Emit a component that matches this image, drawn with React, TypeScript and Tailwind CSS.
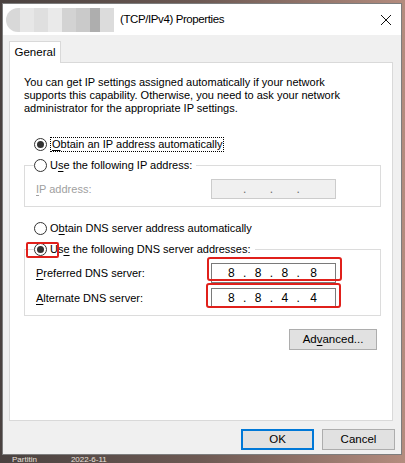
import type { ReactNode } from 'react';

const font = { fontFamily: '"Liberation Sans", Arial, sans-serif' };

function Radio({ checked }: { checked?: boolean }) {
  return (
    <span className="grid h-[13px] w-[13px] shrink-0 place-items-center rounded-full border border-[#333] bg-white">
      {checked && <span className="h-[7px] w-[7px] rounded-full bg-[#333]" />}
    </span>
  );
}

function U({ children }: { children: ReactNode }) {
  return <span className="underline underline-offset-2">{children}</span>;
}

function IpBox({ parts, disabled }: { parts: string[]; disabled?: boolean }) {
  return (
    <div
      className={`flex h-[20px] w-[125px] items-center px-[8px] text-[12px] ${
        disabled ? 'border border-[#cccccc] bg-[#f0f0f0] text-[#6d6d6d]' : 'border border-[#7a7a7a] bg-white text-black'
      }`}
    >
      {parts.map((p, i) => (
        <div key={i} className="flex flex-1 items-center">
          <span className="flex-1 text-center">{p}</span>
          {i < 3 && <span className="w-[4px] text-center">.</span>}
        </div>
      ))}
    </div>
  );
}

function Button({ children, focused, w = 'w-[73px]' }: { children: ReactNode; focused?: boolean; w?: string }) {
  return (
    <div
      className={`grid h-[21px] ${w} place-items-center bg-[#e1e1e1] text-[11.5px] text-black ${
        focused ? 'border-2 border-[#0078d7]' : 'border border-[#adadad]'
      }`}
    >
      {children}
    </div>
  );
}

export default function App() {
  return (
    <div
      className="relative h-[463px] w-[405px] overflow-hidden bg-gradient-to-r from-[#4a4240] via-[#6e5a54] to-[#b48c7e] text-[11px] leading-[13px] text-black"
      style={font}
    >
      <div className="ml-[2px] mt-[3px] flex h-[452px] w-[400px] flex-col border border-[#7d7d7d] bg-[#f0f0f0]">
        {/* title bar */}
        <div className="flex h-[31px] items-center bg-white">
          <div className="ml-[3px] flex h-[24px] w-[108px] overflow-hidden rounded-l-[12px] opacity-80">
            <span className="w-[14px] bg-[#cfcfcf]" />
            <span className="w-[14px] bg-[#e2e2e2]" />
            <span className="w-[14px] bg-[#d8d8d8]" />
            <span className="w-[14px] bg-[#e6e6e6]" />
            <span className="w-[14px] bg-[#c9c9c9]" />
            <span className="w-[14px] bg-[#bdbdbd]" />
            <span className="w-[10px] bg-[#9a9a9a]" />
            <span className="w-[14px] bg-[#d4d4d4]" />
          </div>
          <span className="ml-[6px] text-[11.5px] tracking-[-0.4px]">(TCP/IPv4) Properties</span>
          <svg className="ml-auto mr-[9px]" width="12" height="12" viewBox="0 0 12 12">
            <path d="M1 1L11 11M11 1L1 11" stroke="#111" strokeWidth="1" />
          </svg>
        </div>

        {/* body */}
        <div className="flex flex-1 flex-col px-[6px] pt-[6px]">
          <div className="flex">
            <div className="relative z-10 -mb-px flex h-[22px] w-[52px] items-center justify-center border border-b-0 border-[#d9d9d9] bg-white text-[11.5px]">
              General
            </div>
          </div>
          <div className="flex h-[359px] w-[384px] flex-col border border-[#d9d9d9] bg-white px-[14px] pt-[13px]">
            <p className="leading-[13px]">
              You can get IP settings assigned automatically if your network
              <br />
              supports this capability. Otherwise, you need to ask your network
              <br />
              administrator for the appropriate IP settings.
            </p>

            <div className="ml-[10px] mt-[22px] flex items-center gap-[3px]">
              <Radio checked />
              <span className="border border-dotted border-black px-px">
                <U>O</U>btain an IP address automatically
              </span>
            </div>

            <div className="mt-[13px] h-[42px] w-[357px] border border-[#dcdcdc]">
              <div className="-mt-[7px] ml-[9px] flex w-fit items-center gap-[3px] bg-white pr-[4px]">
                <Radio />
                <span>
                  U<U>s</U>e the following IP address:
                </span>
              </div>
              <div className="mt-[7px] flex items-center pl-[11px] pr-[44px]">
                <span className="text-[#a0a0a0]">
                  <U>I</U>P address:
                </span>
                <div className="ml-auto">
                  <IpBox parts={['', '', '', '']} disabled />
                </div>
              </div>
            </div>

            <div className="ml-[10px] mt-[15px] flex items-center gap-[3px]">
              <Radio />
              <span>
                O<U>b</U>tain DNS server address automatically
              </span>
            </div>

            <div className="mt-[14px] h-[67px] w-[357px] border border-[#dcdcdc]">
              <div className="-mt-[7px] ml-[9px] flex w-fit items-center gap-[3px] bg-white pr-[4px]">
                <Radio checked />
                <span>
                  Us<U>e</U> the following DNS server addresses:
                </span>
              </div>
              <div className="mt-[7px] flex items-center pl-[11px] pr-[44px]">
                <span>
                  <U>P</U>referred DNS server:
                </span>
                <div className="ml-auto">
                  <IpBox parts={['8', '8', '8', '8']} />
                </div>
              </div>
              <div className="mt-[5px] flex items-center pl-[11px] pr-[44px]">
                <span>
                  <U>A</U>lternate DNS server:
                </span>
                <div className="ml-auto">
                  <IpBox parts={['8', '8', '4', '4']} />
                </div>
              </div>
            </div>

            <div className="mt-[13px] flex justify-end pr-[1px]">
              <Button w="w-[88px]">
                <span>
                  Ad<U>v</U>anced...
                </span>
              </Button>
            </div>
          </div>

          <div className="mt-[8px] flex justify-end gap-[8px]">
            <Button focused>OK</Button>
            <Button>Cancel</Button>
          </div>
        </div>
      </div>

      {/* bottom background text */}
      <div className="flex gap-[34px] pl-[12px] pt-px text-[8px] leading-[7px] text-[#e8e0dc]">
        <span>Partitin</span>
        <span>2022-6-11</span>
      </div>

      {/* red annotations */}
      <div className="absolute left-[26px] top-[242px] h-[16px] w-[33px] rounded-[2px] border-2 border-[#e0201b]" />
      <div className="absolute left-[207px] top-[257px] h-[24px] w-[135px] rounded-[3px] border-2 border-[#e0201b]" />
      <div className="absolute left-[206px] top-[283px] h-[25px] w-[135px] rounded-[3px] border-2 border-[#e0201b]" />
    </div>
  );
}
